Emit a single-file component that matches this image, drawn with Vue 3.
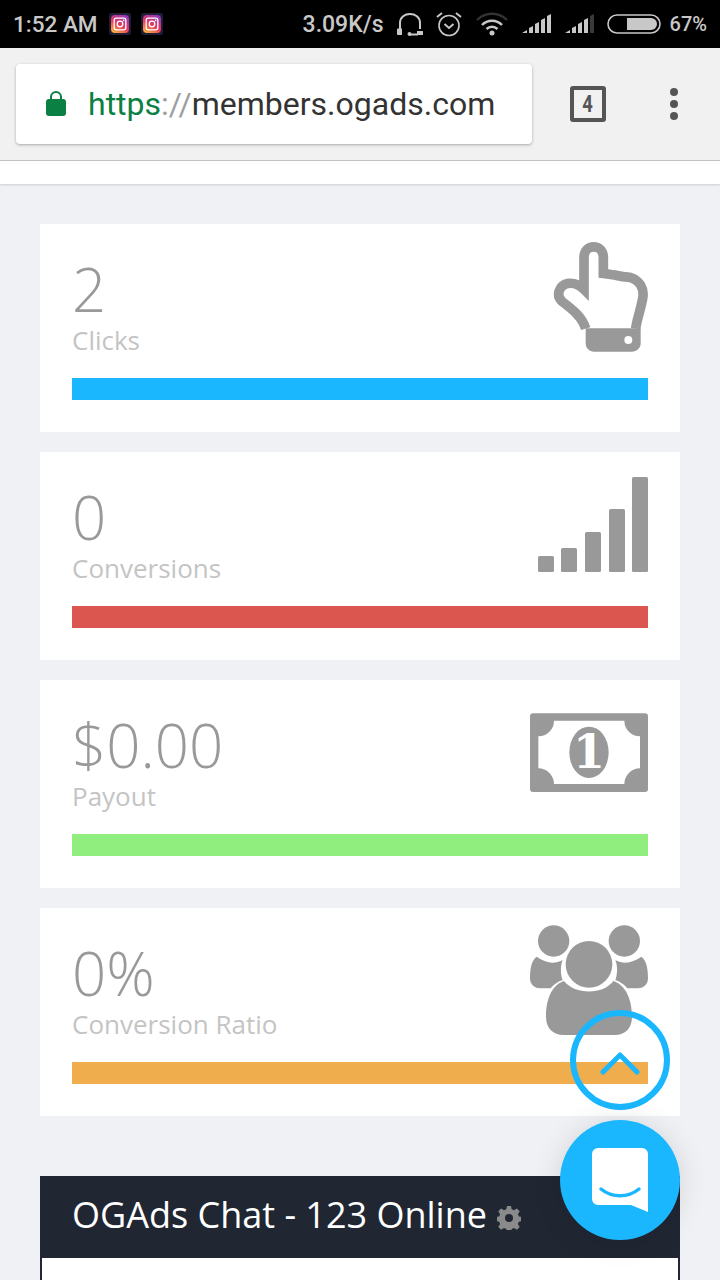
<template>
  <div class="phone">
    <!-- status bar -->
    <div class="statusbar">
      <div class="status-left">
        <span class="clock">1:52 AM</span>
        <svg v-for="n in 2" :key="n" class="insta" viewBox="0 0 22 22">
          <defs>
            <linearGradient :id="'ig' + n" x1="0.2" y1="1" x2="0.8" y2="0">
              <stop offset="0" stop-color="#f9b13c" />
              <stop offset="0.45" stop-color="#e8395f" />
              <stop offset="1" stop-color="#8a3ac0" />
            </linearGradient>
          </defs>
          <rect width="22" height="22" rx="3" fill="#211f38" />
          <rect x="2" y="2" width="18" height="18" rx="4" :fill="'url(#ig' + n + ')'" />
          <rect x="5.2" y="5.2" width="11.6" height="11.6" rx="2" fill="none" stroke="#fff" stroke-width="1.3" />
          <circle cx="11" cy="11" r="2.8" fill="none" stroke="#fff" stroke-width="1.3" />
          <circle cx="14.6" cy="7.4" r="0.8" fill="#fff" />
        </svg>
      </div>
      <div class="status-right">
        <span class="speed">3.09K/s</span>
        <svg class="s-icon headset" viewBox="0 0 26 24" width="26" height="24">
          <path d="M3 17V11C3 -1 23 -1 23 11V17" fill="none" stroke="#c8c8c8" stroke-width="2" />
          <path d="M1 16.500H5V23H1C0.400 23 0 22.600 0 22V18C0 17 0.400 16.500 1 16.500Z" fill="#c8c8c8" />
          <path d="M20 19H25C25.600 19 26 19.400 26 20V23H20Z" fill="#c8c8c8" />
          <path d="M12 22.500H21" stroke="#c8c8c8" stroke-width="2" />
          <circle cx="12.500" cy="22" r="2" fill="#c8c8c8" />
        </svg>
        <svg class="s-icon alarm" viewBox="0 0 26 26" width="26" height="26">
          <circle cx="13" cy="14.500" r="10" fill="none" stroke="#c8c8c8" stroke-width="1.600" />
          <path d="M8.500 13l4.500 4 4.500-4" fill="none" stroke="#c8c8c8" stroke-width="1.800" />
          <path d="M1 6l5-4M25 6l-5-4" stroke="#c8c8c8" stroke-width="2" fill="none" />
        </svg>
        <svg class="s-icon wifi" viewBox="0 0 32 24" width="32" height="24">
          <path d="M1 8a21 21 0 0 1 30 0" fill="none" stroke="#333" stroke-width="2.500" />
          <path d="M6 13a14 14 0 0 1 20 0" fill="none" stroke="#c8c8c8" stroke-width="2.500" />
          <path d="M10.500 17a8 8 0 0 1 11 0" fill="none" stroke="#c8c8c8" stroke-width="2.500" />
          <circle cx="16" cy="21" r="2.500" fill="#c8c8c8" />
        </svg>
        <svg class="s-icon sig1" viewBox="0 0 32 22" width="32" height="22">
          <path d="M0 20l5-3v3zM7 20v-5l4-2v7zM13 20v-9l4-2v11zM19 20v-13l4-2v15zM25 20V3l4-2v19z" fill="#c8c8c8" />
        </svg>
        <svg class="s-icon sig2" viewBox="0 0 32 22" width="32" height="22">
          <path d="M0 20l5-3v3zM7 20v-5l4-2v7zM13 20v-9l4-2v11zM19 20v-13l4-2v15z" fill="#c8c8c8" />
          <path d="M25 20V3l4-2v19z" fill="#3a3a3a" />
        </svg>
        <svg class="s-icon battery" viewBox="0 0 54 20" width="54" height="20">
          <rect x="1" y="1" width="52" height="18" rx="9" fill="none" stroke="#c8c8c8" stroke-width="1.600" />
          <path d="M20 4h24a6 6 0 0 1 0 12H20z" fill="#c8c8c8" />
        </svg>
        <span class="pct">67%</span>
      </div>
    </div>

    <!-- browser toolbar -->
    <div class="toolbar">
      <div class="omnibox">
        <svg class="lock" viewBox="0 0 20 26" width="20" height="26">
          <path d="M5 11V7a5 5 0 0 1 10 0v4" fill="none" stroke="#0b8043" stroke-width="2" />
          <rect y="9" width="20" height="17" rx="3" fill="#0b8043" />
        </svg>
        <span class="url"><span class="scheme">https</span><span class="sep">://</span>members.ogads.com</span>
      </div>
      <div class="tabs"><span>4</span></div>
      <div class="dots"><i></i><i></i><i></i></div>
    </div>

    <div class="nav-strip"></div>

    <!-- stat cards -->
    <div class="content">
      <div v-for="card in cards" :key="card.label" class="card">
        <div class="card-top">
          <div class="card-text">
            <div class="num">{{ card.value }}</div>
            <div class="label">{{ card.label }}</div>
          </div>
          <svg v-if="card.icon === 'hand'" class="icon" viewBox="30 30 354 330">
            <path d="M197 296C187 262 160 240 128 216C106 198 116 165 146 160C165 158 180 166 192 178V82C192 40 250 40 250 82V130C262 131 272 134 284 135C296 138 306 141 330 142C358 150 374 175 368 205C362 240 352 262 347 296" fill="none" stroke="#999" stroke-width="29" />
            <path d="M197 295H362V340C362 355 350 365 335 365H222C208 365 197 355 197 340Z" fill="#999" />
            <circle cx="325" cy="330" r="12" fill="#fff" />
          </svg>
          <svg v-else-if="card.icon === 'bars'" class="icon" viewBox="0 0 118 110">
            <rect v-for="b in bars" :key="b.x" :x="b.x" :y="b.y" width="16" :height="104 - b.y" rx="1.500" fill="#999" />
          </svg>
          <svg v-else-if="card.icon === 'money'" class="icon" viewBox="30 -12 354 330">
            <rect x="30" y="40" width="354" height="236" rx="9" fill="#999" />
            <path d="M102 62H313A47 47 0 0 0 360 109V205A47 47 0 0 0 313 252H102A47 47 0 0 0 55 205V109A47 47 0 0 0 102 62Z" fill="#fff" />
            <ellipse cx="207" cy="157" rx="59" ry="77" fill="#999" />
            <text x="207" y="205" text-anchor="middle" class="bill-one">1</text>
          </svg>
          <svg v-else class="icon" viewBox="30 27 354 330">
            <circle cx="101" cy="78" r="47" fill="#999" />
            <circle cx="313" cy="78" r="47" fill="#999" />
            <path d="M50 125C35 135 30 160 30 190C30 210 45 220 60 220H92C105 205 118 198 128 196C122 180 120 155 128 135C100 150 75 142 50 125Z" fill="#999" />
            <path d="M364 125C379 135 384 160 384 190C384 210 369 220 354 220H322C309 205 296 198 286 196C292 180 294 155 286 135C314 150 339 142 364 125Z" fill="#999" />
            <circle cx="207" cy="148" r="70" fill="#999" />
            <path d="M132 198C100 208 78 245 78 305C78 340 100 360 130 360H285C315 360 336 340 336 305C336 245 312 208 280 198C250 240 165 240 132 198Z" fill="#999" />
          </svg>
        </div>
        <div class="bar" :style="{ background: card.color }"></div>
      </div>

      <div class="chat">
        <div class="chat-head">
          <span>OGAds Chat - 123 Online</span>
          <svg class="gear" viewBox="0 0 24 24" width="24" height="24">
            <path d="M10 0h4l.7 3.300 2.300 1 2.900-1.800 2.800 2.800-1.800 2.900 1 2.300 3.100.500v4l-3.100.700-1 2.300 1.800 2.900-2.800 2.800-2.900-1.800-2.300 1-.7 3.100h-4l-.7-3.100-2.300-1-2.900 1.800-2.800-2.800 1.800-2.900-1-2.300-3.100-.700v-4l3.100-.500 1-2.300-1.800-2.900 2.800-2.800 2.900 1.800 2.300-1z" fill="#8a8a8a" />
            <circle cx="12" cy="12" r="4" fill="#202733" />
          </svg>
        </div>
        <div class="chat-body"></div>
      </div>
    </div>

    <!-- floating buttons -->
    <div class="to-top">
      <svg viewBox="0 0 40 24" width="40" height="24">
        <path d="M3 20L20 3l17 17" fill="none" stroke="#1ab7ff" stroke-width="5" stroke-linecap="round" stroke-linejoin="round" />
      </svg>
    </div>
    <div class="chat-btn">
      <svg viewBox="0 0 56 64" width="56" height="64">
        <path d="M6 0H50A6 6 0 0 1 56 6V64L39 57H6A6 6 0 0 1 0 51V6A6 6 0 0 1 6 0Z" fill="#fff" />
        <path d="M9 41C20 50 36 50 47 41" fill="none" stroke="#1ab7ff" stroke-width="3.500" stroke-linecap="round" />
      </svg>
    </div>
  </div>
</template>

<script setup>
const cards = [
  { value: '2', label: 'Clicks', color: '#1ab7ff', icon: 'hand' },
  { value: '0', label: 'Conversions', color: '#dc5650', icon: 'bars' },
  { value: '$0.00', label: 'Payout', color: '#90ee7e', icon: 'money' },
  { value: '0%', label: 'Conversion Ratio', color: '#f0ad4e', icon: 'users' }
]

const bars = [
  { x: 8, y: 88 },
  { x: 31, y: 80 },
  { x: 55, y: 64 },
  { x: 79, y: 41 },
  { x: 102, y: 9 }
]
</script>

<style>
html,
body {
  margin: 0;
  background: #f0f1f5;
}
</style>

<style scoped>
.phone {
  position: relative;
  width: 720px;
  height: 1280px;
  overflow: hidden;
  background: #f0f1f5;
  font-family: "Open Sans", sans-serif;
}

.statusbar {
  height: 48px;
  background: #000;
  color: #c8c8c8;
  display: flex;
  justify-content: space-between;
  align-items: center;
  padding: 0 13px;
  box-sizing: border-box;
  font-family: Roboto, sans-serif;
  font-weight: 500;
}

.status-left {
  display: flex;
  align-items: center;
}

.clock {
  font-size: 22.5px;
  margin-right: 11px;
}

.insta {
  width: 22px;
  height: 22px;
  margin-right: 10px;
}

.status-right {
  display: flex;
  align-items: center;
}

.speed {
  font-size: 23px;
  margin-right: 13px;
}

.s-icon {
  display: block;
  flex: none;
}

.headset {
  margin-right: 13px;
}

.alarm {
  margin-right: 14px;
}

.wifi {
  margin-right: 14px;
}

.sig1 {
  margin-right: 11px;
}

.sig2 {
  margin-right: 10px;
}

.battery {
  margin-right: 9px;
}

.pct {
  font-size: 20px;
}

.toolbar {
  height: 113px;
  background: #f1f1f1;
  border-bottom: 1px solid #c4c4c4;
  display: flex;
  align-items: flex-start;
  padding: 16px 0 0 16px;
  box-sizing: border-box;
}

.omnibox {
  width: 516px;
  height: 80px;
  background: #fff;
  border-radius: 4px;
  box-shadow: 0 1px 3px rgba(0, 0, 0, 0.3);
  display: flex;
  align-items: center;
  padding-left: 30px;
  box-sizing: border-box;
}

.lock {
  margin-right: 22px;
  margin-top: -2px;
}

.url {
  font-family: Roboto, sans-serif;
  font-size: 32px;
  color: #333;
  white-space: nowrap;
}

.scheme {
  color: #0b8043;
}

.sep {
  color: #9e9e9e;
}

.tabs {
  width: 36px;
  height: 36px;
  margin: 22px 0 0 38px;
  border: 4px solid #555;
  border-radius: 3px;
  box-sizing: border-box;
  color: #555;
  font-family: Roboto, sans-serif;
  font-weight: 700;
  font-size: 23px;
  display: flex;
  align-items: center;
  justify-content: center;
}

.tabs span {
  transform: scaleX(0.8);
}

.dots {
  margin: 24px 0 0 64px;
  display: flex;
  flex-direction: column;
  gap: 4px;
}

.dots i {
  display: block;
  width: 8px;
  height: 8px;
  border-radius: 50%;
  background: #555;
}

.nav-strip {
  height: 23px;
  background: #fff;
  box-shadow: 0 1px 2px rgba(0, 0, 0, 0.15);
}

.content {
  padding: 40px 40px 0;
  display: flex;
  flex-direction: column;
  gap: 20px;
}

.card {
  height: 208px;
  background: #fff;
  padding: 16px 32px 0;
  box-sizing: border-box;
}

.card-top {
  height: 138px;
  display: flex;
  justify-content: space-between;
}

.card-text {
  padding-top: 19px;
}

.num {
  font-size: 60px;
  font-weight: 300;
  line-height: 60px;
  color: #999;
}

.label {
  margin-top: 6px;
  font-size: 26px;
  line-height: 30px;
  color: #c4c4c4;
}

.icon {
  width: 118px;
  height: 110px;
  flex: none;
  overflow: visible;
}

.bill-one {
  font-family: "DejaVu Serif", serif;
  font-weight: 700;
  font-size: 138px;
  fill: #fff;
}

.bar {
  height: 22px;
}

.chat {
  margin-top: 40px;
}

.chat-head {
  height: 82px;
  background: #202733;
  color: #fff;
  display: flex;
  align-items: center;
  padding-left: 32px;
  font-size: 36px;
}

.chat-head span {
  margin-top: -6px;
}

.gear {
  margin-left: 10px;
  margin-top: 2px;
}

.chat-body {
  height: 200px;
  background: #fff;
  border: 2px solid #202733;
  border-top: none;
}

.to-top {
  position: absolute;
  left: 570px;
  top: 1010px;
  width: 100px;
  height: 100px;
  border: 6px solid #1ab7ff;
  border-radius: 50%;
  box-sizing: border-box;
  display: flex;
  align-items: center;
  justify-content: center;
}

.to-top svg {
  margin-top: 8px;
}

.chat-btn {
  position: absolute;
  left: 560px;
  top: 1120px;
  width: 120px;
  height: 120px;
  border-radius: 50%;
  background: #1ab7ff;
  box-shadow: 0 2px 30px rgba(0, 0, 0, 0.12);
  display: flex;
  align-items: center;
  justify-content: center;
}
</style>
